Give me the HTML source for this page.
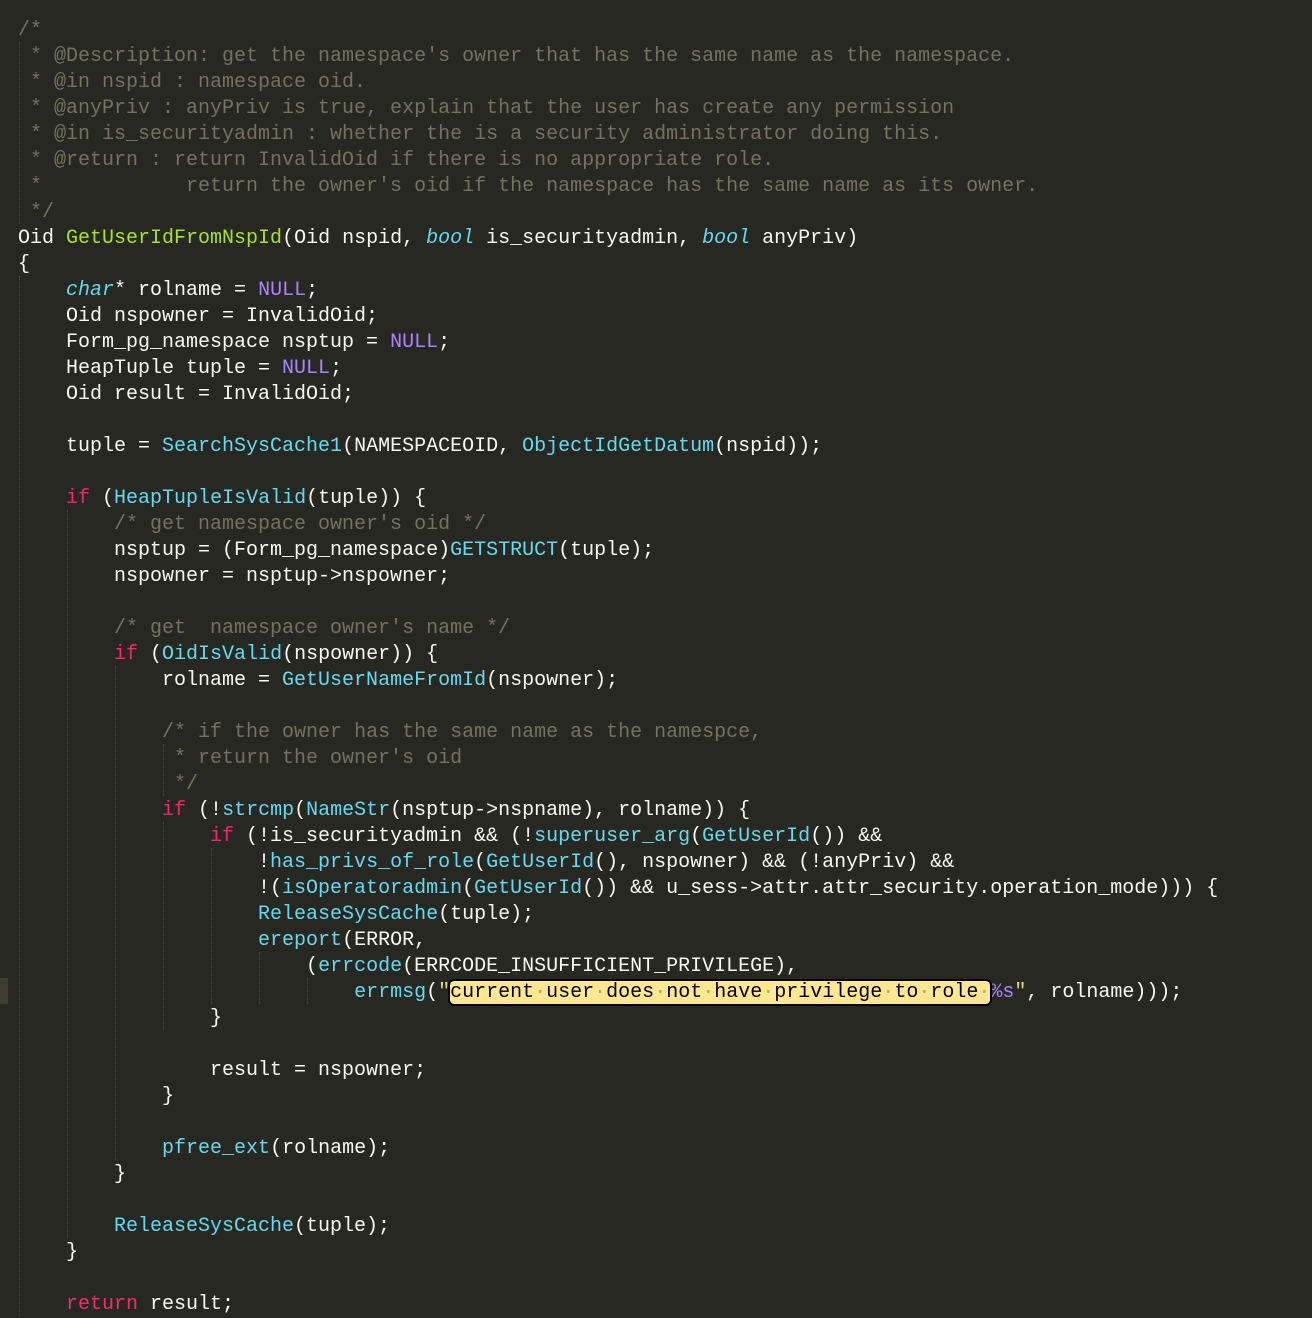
<!DOCTYPE html>
<html><head><meta charset="utf-8"><style>
html,body{margin:0;padding:0;background:#272822;width:1312px;height:1316px;overflow:hidden}
pre{margin:0;position:absolute;left:18px;top:18px;font-family:"Liberation Mono",monospace;font-size:20px;line-height:26px;color:#f8f8f2;white-space:pre}
.c{color:#75715e}.k{color:#f92672}.o{color:#f8f8f2}.t{color:#66d9ef;font-style:italic}.f{color:#a6e22e}.n{color:#66d9ef}.p{color:#ae81ff}.s{color:#e6db74}
.h{background:#ffe792;color:#000;outline:2px solid #000;border-radius:4px}
.d{color:#b8a860}
.g{position:absolute;width:0;border-left:1px dotted #4a4a42}
.mark{position:absolute;left:0;top:978px;width:8px;height:26px;background:#3e3d32}
</style></head><body>
<div class="mark"></div>
<div class="g" style="left:19px;top:42px;height:182px"></div>
<div class="g" style="left:19px;top:276px;height:1040px"></div>
<div class="g" style="left:67px;top:510px;height:728px"></div>
<div class="g" style="left:115px;top:666px;height:494px"></div>
<div class="g" style="left:163px;top:744px;height:52px"></div>
<div class="g" style="left:163px;top:822px;height:208px"></div>
<div class="g" style="left:211px;top:848px;height:156px"></div>
<div class="g" style="left:259px;top:952px;height:52px"></div>
<div class="g" style="left:307px;top:978px;height:26px"></div>
<pre><span class="c">/*
 * @Description: get the namespace's owner that has the same name as the namespace.
 * @in nspid : namespace oid.
 * @anyPriv : anyPriv is true, explain that the user has create any permission
 * @in is_securityadmin : whether the is a security administrator doing this.
 * @return : return InvalidOid if there is no appropriate role.
 *            return the owner's oid if the namespace has the same name as its owner.
 */</span>
Oid <span class="f">GetUserIdFromNspId</span>(Oid nspid, <span class="t">bool</span> is_securityadmin, <span class="t">bool</span> anyPriv)
{
    <span class="t">char</span>* rolname = <span class="p">NULL</span>;
    Oid nspowner = InvalidOid;
    Form_pg_namespace nsptup = <span class="p">NULL</span>;
    HeapTuple tuple = <span class="p">NULL</span>;
    Oid result = InvalidOid;

    tuple = <span class="n">SearchSysCache1</span>(NAMESPACEOID, <span class="n">ObjectIdGetDatum</span>(nspid));

    <span class="k">if</span> (<span class="n">HeapTupleIsValid</span>(tuple)) {
        <span class="c">/* get namespace owner's oid */</span>
        nsptup = (Form_pg_namespace)<span class="n">GETSTRUCT</span>(tuple);
        nspowner = nsptup-&gt;nspowner;

        <span class="c">/* get  namespace owner's name */</span>
        <span class="k">if</span> (<span class="n">OidIsValid</span>(nspowner)) {
            rolname = <span class="n">GetUserNameFromId</span>(nspowner);

            <span class="c">/* if the owner has the same name as the namespce,
             * return the owner's oid
             */</span>
            <span class="k">if</span> (!<span class="n">strcmp</span>(<span class="n">NameStr</span>(nsptup-&gt;nspname), rolname)) {
                <span class="k">if</span> (!is_securityadmin &amp;&amp; (!<span class="n">superuser_arg</span>(<span class="n">GetUserId</span>()) &amp;&amp;
                    !<span class="n">has_privs_of_role</span>(<span class="n">GetUserId</span>(), nspowner) &amp;&amp; (!anyPriv) &amp;&amp;
                    !(<span class="n">isOperatoradmin</span>(<span class="n">GetUserId</span>()) &amp;&amp; u_sess-&gt;attr.attr_security.operation_mode))) {
                    <span class="n">ReleaseSysCache</span>(tuple);
                    <span class="n">ereport</span>(ERROR,
                        (<span class="n">errcode</span>(ERRCODE_INSUFFICIENT_PRIVILEGE),
                            <span class="n">errmsg</span>(<span class="s">"</span><span class="h">current<span class="d">·</span>user<span class="d">·</span>does<span class="d">·</span>not<span class="d">·</span>have<span class="d">·</span>privilege<span class="d">·</span>to<span class="d">·</span>role<span class="d">·</span></span><span class="p">%s</span><span class="s">"</span>, rolname)));
                }

                result = nspowner;
            }

            <span class="n">pfree_ext</span>(rolname);
        }

        <span class="n">ReleaseSysCache</span>(tuple);
    }

    <span class="k">return</span> result;</pre>
</body></html>
